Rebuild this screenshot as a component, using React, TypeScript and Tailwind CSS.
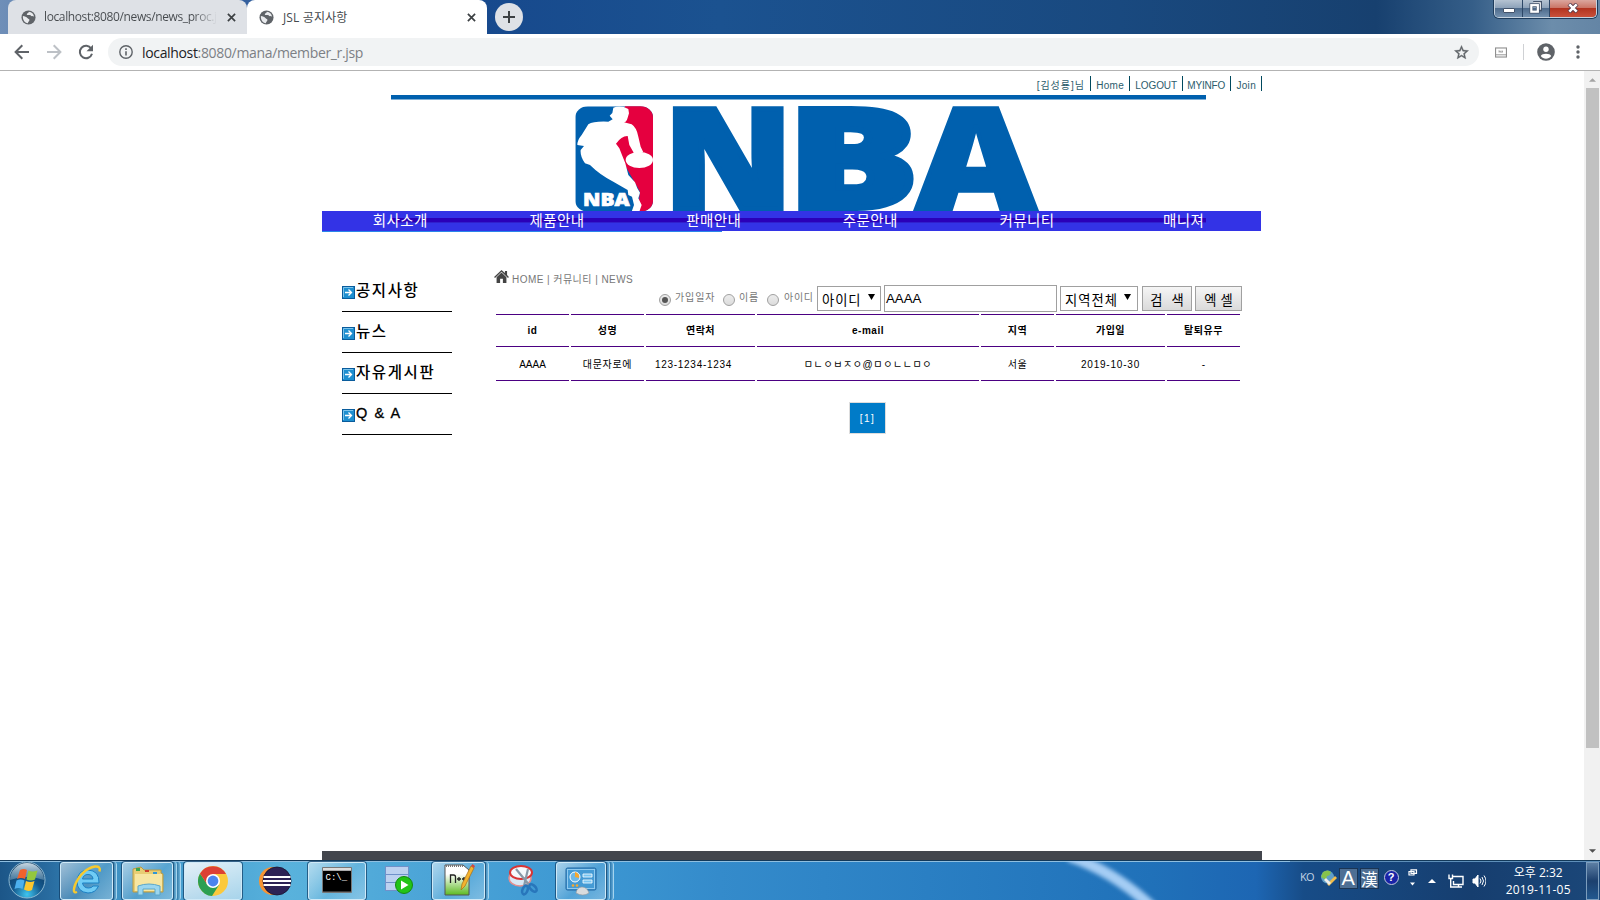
import React from "react";

const UI = "font-['Open_Sans','Noto_Sans_CJK_KR',sans-serif]";
const PAGE = "font-['Liberation_Sans','Noto_Sans_CJK_KR',sans-serif]";

function Globe() {
  return (
    <svg viewBox="0 0 16 16" className="h-[15px] w-[15px] shrink-0">
      <circle cx="8" cy="8" r="7.5" fill="#5f6368" />
      <path d="M2 6.5C4 7 6 7.2 6.8 8.5 7.5 9.8 9 9 9 10.6 9 12 7.6 12 7.4 14 4 14 1.8 11 2 6.5ZM8.4 1.8C8 3.4 6 3.4 6.2 5c1.5.8 2.6-.3 4 .6.8 1.8 2.4.8 3.7 1.4C13.5 4 11.500 2 8.400 1.800Z" fill="#e8eaed" />
    </svg>
  );
}

function Cross() {
  return (
    <svg viewBox="0 0 10 10" className="h-[9px] w-[9px] shrink-0" stroke="#3c4043" strokeWidth="1.9">
      <path d="M1 1l8 8M9 1l-8 8" />
    </svg>
  );
}

function TitleBar() {
  return (
    <div className="flex h-[34px] w-full shrink-0 bg-[linear-gradient(90deg,#6f8fb8_0%,#426ba6_8%,#17498d_30%,#1b5290_45%,#19497f_70%,#17406f_86%,#355e88_92%,#6c8dab_97%,#6485a5_100%)] pl-2">
      <div className={`${UI} flex h-[34px] w-[239px] items-center rounded-t-lg bg-[#dee1e6] pl-[13px] text-[12px] text-[#45494d]`}>
        <Globe />
        <span className="ml-[8px] w-[173px] overflow-hidden whitespace-nowrap bg-[linear-gradient(90deg,#45494d_86%,transparent)] bg-clip-text tracking-[-0.38px] text-transparent">localhost:8080/news/news_proc.jsp</span>
        <span className="ml-[10px]"><Cross /></span>
      </div>
      <div className={`${UI} flex h-[34px] w-[240px] items-center rounded-t-lg bg-white pl-[12px] text-[12px] text-[#45494d]`}>
        <Globe />
        <span className="ml-[8px] mt-px w-[185px] pl-px tracking-[0.15px]">JSL 공지사항</span>
        <Cross />
      </div>
      <div className="ml-[8px] mt-[3px] flex h-[28px] w-[28px] items-center justify-center rounded-full bg-[#dee1e6]">
        <svg viewBox="0 0 12 12" className="h-[12px] w-[12px]" stroke="#3c4043" strokeWidth="2"><path d="M6 0v12M0 6h12" /></svg>
      </div>
      <div className="ml-auto mr-[3px] flex h-[18px] w-[103px] overflow-hidden rounded-b-[5px] border border-t-0 border-[#c5d2df] shadow-[0_0_0_1px_#1e3c5c]">
        <div className="flex w-[28px] items-center justify-center border-r border-[#2c4767] bg-[linear-gradient(#b5c3d2_0%,#8ea3ba_45%,#4e6b8c_50%,#7491af_100%)]">
          <span className="mt-[3px] h-[5px] w-[12px] rounded-[1px] border border-[#43536b] bg-white" />
        </div>
        <div className="flex w-[27px] items-center justify-center border-r border-[#2c4767] bg-[linear-gradient(#b5c3d2_0%,#8ea3ba_45%,#4e6b8c_50%,#7491af_100%)]">
          <svg viewBox="0 0 14 14" className="mr-[2px] mt-[-2px] h-[13px] w-[13px]" fill="none"><path d="M4.500 1.500h8v8h-2" stroke="#43536b" strokeWidth="3" /><path d="M4.500 2h7.500v7.500" stroke="#fff" strokeWidth="1.500" /><rect x="2.500" y="4.500" width="7" height="7" stroke="#43536b" strokeWidth="4" /><rect x="2.500" y="4.500" width="7" height="7" stroke="#fff" strokeWidth="2.400" /></svg>
        </div>
        <div className="flex grow items-center justify-center bg-[linear-gradient(#dba79e_0%,#cb7667_45%,#b23420_50%,#c9503a_100%)]">
          <svg viewBox="0 0 12 10" className="mt-[-2px] h-[10px] w-[12px]"><path d="M2 1l8 8M10 1l-8 8" stroke="#51384a" strokeWidth="4.200" /><path d="M2.300 1.300l7.400 7.400M9.700 1.300l-7.400 7.400" stroke="#fff" strokeWidth="2.600" /></svg>
        </div>
      </div>
    </div>
  );
}

function Toolbar() {
  return (
    <div className="flex h-[37px] w-full shrink-0 items-center border-b border-[#b3b3b3] bg-white">
      <svg viewBox="0 0 16 16" className="ml-[14px] h-4 w-4" fill="none" stroke="#5f6368" strokeWidth="2"><path d="M15 8H2M8.300 1.300L1.600 8l6.700 6.700" /></svg>
      <svg viewBox="0 0 16 16" className="ml-4 h-4 w-4" fill="none" stroke="#bdc1c6" strokeWidth="2"><path d="M1 8h13M7.700 1.300L14.400 8l-6.700 6.700" /></svg>
      <svg viewBox="0 0 16 16" className="ml-4 h-4 w-4"><path d="M13.200 4.500A6.200 6.200 0 1 0 14 9.800" fill="none" stroke="#5f6368" strokeWidth="2" /><path d="M15 .7v6.500H8.500z" fill="#5f6368" /></svg>
      <div className={`${UI} ml-[14px] flex h-[28px] w-[1371px] items-center rounded-full bg-[#f1f3f4] pl-[11px] text-[14px]`}>
        <svg viewBox="0 0 14 14" className="h-[14px] w-[14px]" fill="none" stroke="#5f6368"><circle cx="7" cy="7" r="6.200" strokeWidth="1.400" /><path d="M7 6.200v4.300M7 3.300v1.700" strokeWidth="1.600" /></svg>
        <span className="ml-[9px] tracking-[-0.34px] text-[#7c8085]"><span className="text-[#202124]">localhost</span>:8080/mana/member_r.jsp</span>
        <svg viewBox="0 0 24 24" className="ml-auto mr-[9px] h-[17px] w-[17px]" fill="#5f6368" stroke="#5f6368" strokeWidth=".5"><path d="M22 9.240l-7.190-.62L12 2 9.190 8.630 2 9.240l5.460 4.730L5.820 21 12 17.270 18.180 21l-1.630-7.030L22 9.240zM12 15.400l-3.760 2.270 1-4.280-3.320-2.880 4.380-.38L12 6.100l1.710 4.040 4.380.38-3.320 2.880 1 4.280L12 15.400z" /></svg>
      </div>
      <svg viewBox="0 0 13 11" className="ml-[16px] h-[11px] w-[12px]" fill="none" stroke="#8f8f8f"><rect x=".6" y=".6" width="11.800" height="9.800" strokeWidth="1.200" /><path d="M1 8h11M4.500 5.500v-2l2 2v-2M8 3.500v2" /></svg>
      <span className="ml-[16px] h-4 w-px bg-[#cfd1d4]" />
      <svg viewBox="0 0 18 18" className="ml-[13px] h-[18px] w-[18px]"><circle cx="9" cy="9" r="8.800" fill="#5f6368" /><circle cx="9" cy="6.200" r="2.700" fill="#fff" /><path d="M3.800 13c1-3 9.400-3 10.400 0-2.500 3.700-7.900 3.700-10.400 0z" fill="#fff" /></svg>
      <svg viewBox="0 0 4 14" className="ml-[21px] h-[14px] w-[4px]" fill="#5f6368"><circle cx="2" cy="2" r="1.700" /><circle cx="2" cy="7" r="1.700" /><circle cx="2" cy="12" r="1.700" /></svg>
    </div>
  );
}

function TopLinks() {
  const items = [
    { t: "[김성룡]님", w: "w-[61px]", s: "tracking-[1px]" },
    { t: "Home", w: "w-[39px]", s: "tracking-[0.3px]" },
    { t: "LOGOUT", w: "w-[53px]", s: "tracking-[-0.1px]" },
    { t: "MYINFO", w: "w-[48px]", s: "tracking-[-0.2px]" },
    { t: "Join", w: "w-[31px]", s: "tracking-[0.3px]" },
  ];
  return (
    <div className={`${PAGE} flex h-[24px] justify-end pt-[5px] text-[10px] text-[#2c5c6c]`}>
      {items.map((i) => (
        <span key={i.t} className={`${i.w} ${i.s} h-[15px] whitespace-nowrap border-r border-[#00495e] pr-[5px] text-right leading-[19px]`}>{i.t}</span>
      ))}
    </div>
  );
}

function Banner() {
  return (
    <svg viewBox="322 95 940 116" className="block h-[116px] w-[940px]">
      <defs>
        <clipPath id="badge"><rect x="46" y="34" width="233" height="316" rx="38" ry="32" /></clipPath>
      </defs>
      <rect x="391" y="95" width="815" height="4.500" fill="#0060ae" />
      <g transform="translate(560 95) scale(0.33333)">
        <g clipPath="url(#badge)">
          <rect x="46" y="34" width="233" height="320" fill="#0060ae" />
          <path d="M195 30H300V360H232L240 290 200 220 165 145 180 120 190 80Z" fill="#e5003f" />
          <path d="M160 38Q182 30 205 42L207 55 203 68Q200 80 192 82L215 88Q230 98 235 125L242 155 250 172 225 180 208 150 203 123Q185 122 168 146L178 160 186 180 196 205 205 240 225 262 232 280 240 293 235 310 245 330 238 350 215 350 222 330 216 305 205 300 203 285 160 260Q120 240 90 210L75 205Q60 185 62 165L72 153 52 150Q52 135 65 120L85 88Q100 78 145 80L158 73 149 62 157 54Z" fill="#fff" />
          <ellipse cx="238" cy="195" rx="41" ry="24" fill="#fff" />
          <text x="69" y="333" fontFamily="Open Sans" fontWeight="800" fontSize="53" fill="#fff" stroke="#fff" strokeWidth="2" textLength="140" lengthAdjust="spacingAndGlyphs">NBA</text>
        </g>
      </g>
      <g fontFamily="Open Sans" fontWeight="800" fill="#0060ae" stroke="#0060ae" strokeMiterlimit="3">
        <text x="663.7" y="208.500" fontSize="139.500" strokeWidth="5" textLength="129" lengthAdjust="spacingAndGlyphs">N</text>
        <text x="787.5" y="208" fontSize="138" strokeWidth="6" textLength="131" lengthAdjust="spacingAndGlyphs">B</text>
        <text x="915.5" y="209.500" fontSize="142" strokeWidth="3.500" textLength="121" lengthAdjust="spacingAndGlyphs">A</text>
      </g>
    </svg>
  );
}

function Nav() {
  return (
    <>
      <div className="h-5 w-[939px] bg-[#3333e6]">
        <div className={`${PAGE} grid h-5 w-[940px] grid-cols-6 bg-[linear-gradient(#3333e6_0_7px,#2b00b8_7px_11px,#3020cd_11px_12px,#3333e6_12px)] bg-[length:815px_20px] bg-[position:69px_0] bg-no-repeat text-center text-[14.500px] leading-[20px] tracking-[0.4px] text-white`}>
          {["회사소개", "제품안내", "판매안내", "주문안내", "커뮤니티", "매니져"].map((t) => <span key={t}>{t}</span>)}
        </div>
      </div>
      <div className="h-px w-[400px] bg-[#2a86ea]" />
    </>
  );
}

function Sidebar() {
  return (
    <div className={`${PAGE} ml-5 mt-[39px] w-[110px] text-[15.500px] font-medium tracking-[1.600px] text-black`}>
      {["공지사항", "뉴스", "자유게시판", "Q & A"].map((t) => (
        <div key={t} className="flex h-[41px] items-center whitespace-nowrap border-b border-black">
          <svg viewBox="0 0 13 13" className="mt-[2px] h-[13px] w-[13px] shrink-0"><rect x=".5" y=".5" width="12" height="12" fill="#1e8fd0" stroke="#0a5c9c" /><path d="M1.500 11V1.500H11" stroke="#7cc4ec" fill="none" /><path d="M3 6.500h6M6.500 3.500l3 3-3 3" fill="none" stroke="#fff" strokeWidth="1.300" /></svg>
          <span className={t === "Q & A" ? "ml-px text-[14.500px] [-webkit-text-stroke:0.3px_black]" : "ml-px"}>{t}</span>
        </div>
      ))}
    </div>
  );
}

function Radio({ on }: { on?: boolean }) {
  return (
    <span className="mt-[3px] flex h-[12px] w-[12px] shrink-0 items-center justify-center rounded-full border border-[#a0a0a0] bg-[linear-gradient(#ececec,#dcdcdc)]">
      {on && <span className="h-[6px] w-[6px] rounded-full bg-[#555]" />}
    </span>
  );
}

function SearchRow() {
  const label = "mt-[-2px] shrink-0 whitespace-nowrap text-[10px] leading-[22px] text-[#777]";
  const btn = "flex h-[25px] items-center justify-center border border-[#a0a0a0] bg-[linear-gradient(#f5f5f5,#dadada)] pt-[4px] text-[13.300px] text-black";
  return (
    <div className="ml-[167px] flex h-[27px] items-center">
      <Radio on />
      <span className={`${label} ml-[4px] w-[48px] tracking-[0.9px]`}>가입일자</span>
      <Radio />
      <span className={`${label} ml-[4px] w-[28px] tracking-[0.7px]`}>이름</span>
      <Radio />
      <span className={`${label} ml-[5px] w-[33px] tracking-[0.7px]`}>아이디</span>
      <div className="flex h-[25px] w-[64px] shrink-0 items-center justify-between border border-[#a0a0a0] pl-[4px] pr-[5px] text-[13.300px] text-black">
        <span className="pt-[4px] tracking-[0.9px]">아이디</span>
        <svg viewBox="0 0 7 6" className="mb-[3px] h-[6px] w-[7px]"><path d="M0 0h7L3.500 6z" /></svg>
      </div>
      <div className="ml-[3px] h-[27px] w-[173px] shrink-0 border border-[#a0a0a0] pl-px text-[13.300px] leading-[25px] text-black">AAAA</div>
      <div className="ml-[3px] flex h-[25px] w-[78px] shrink-0 items-center justify-between border border-[#a0a0a0] pl-[4px] pr-[6px] text-[13.300px] text-black">
        <span className="pt-[4px] tracking-[1px]">지역전체</span>
        <svg viewBox="0 0 7 6" className="mb-[3px] h-[6px] w-[7px]"><path d="M0 0h7L3.500 6z" /></svg>
      </div>
      <div className={`${btn} ml-[4px] w-[50px] shrink-0 gap-[9px]`}><span>검</span><span>색</span></div>
      <div className={`${btn} ml-[3px] w-[47px] shrink-0 gap-[4px]`}><span>엑</span><span>셀</span></div>
    </div>
  );
}

function MemberTable() {
  const head = ["id", "성명", "연락처", "e-mail", "지역", "가입일", "탈퇴유무"];
  const row = ["AAAA", "대문자로에", "123-1234-1234", "ㅁㄴㅇㅂㅈㅇ@ㅁㅇㄴㄴㅁㅇ", "서울", "2019-10-30", "-"];
  const cell = "h-[34px] whitespace-nowrap border-b border-[#4b0082] leading-[35px]";
  const cellStyles = ["", "tracking-[0.7px]", "pr-[14px] tracking-[0.7px]", "tracking-[0.6px]", "tracking-[0.5px]", "tracking-[0.8px]", ""];
  const cols = "grid grid-cols-[73px_73px_109px_222px_73px_109px_73px] gap-x-[2px]";
  return (
    <div className="ml-[4px] mt-[2px] text-center text-[10px] text-black">
      <div className={`${cols} font-bold`}>
        {head.map((t) => <div key={t} className="h-[33px] border-y border-[#4b0082] leading-[31px] tracking-[0.5px]">{t}</div>)}
      </div>
      <div className={cols}>
        {row.map((t, i) => <div key={t} className={`${cell} ${cellStyles[i]}`}>{t}</div>)}
      </div>
    </div>
  );
}

function Content() {
  return (
    <div className={`${PAGE} ml-[40px] mt-[38px] w-[760px]`}>
      <div className="flex h-[15px] items-center pl-[2px] text-[10px] text-[#777]">
        <svg viewBox="0 0 16 14" className="mt-[-2px] h-[13px] w-[15px]" fill="#444"><path d="M8 0L0 7.500l1 1L8 2l7 6.500 1-1-2-2V1h-2.300v2.300z" /><path d="M8 2.800l5.300 5V14H9.500V9.500h-3V14H2.700V7.800z" /></svg>
        <span className="ml-[3px] whitespace-pre pt-[4px] tracking-[0.45px]">HOME | 커뮤니티 | NEWS</span>
      </div>
      <SearchRow />
      <MemberTable />
      <div className="ml-[357px] mt-[21px] flex h-[32px] w-[37px] items-center justify-center border border-[#ddd] bg-[#007bc8] text-[10px] font-medium tracking-[1.500px] text-white">[1]</div>
    </div>
  );
}

function WebPage() {
  return (
    <div className="flex h-[789px] w-full shrink-0 bg-white">
      <div className="flex h-[789px] w-[1584px] flex-col pl-[322px]">
        <div className="w-[940px]"><TopLinks /></div>
        <Banner />
        <Nav />
        <div className="flex h-[619px]"><Sidebar /><Content /></div>
        <div className="h-[9px] w-[940px] bg-[#43464d]" />
      </div>
      <div className="flex w-4 flex-col items-center bg-[#f1f1f1]">
        <svg viewBox="0 0 8 4" className="mt-[7px] h-[4px] w-[7px]"><path d="M0 4h8L4 0z" fill="#a3a3a3" /></svg>
        <div className="mt-[6px] h-[660px] w-[13px] bg-[#c1c1c1]" />
        <svg viewBox="0 0 8 4" className="mb-[7px] mt-auto h-[4px] w-[7px]"><path d="M0 0h8L4 4z" fill="#505050" /></svg>
      </div>
    </div>
  );
}

const active = "flex h-[38px] shrink-0 items-center justify-center rounded-[3px] border border-[#cfe9f7] bg-[linear-gradient(135deg,rgba(255,255,255,.55),rgba(255,255,255,.1)_55%,rgba(255,255,255,.3))] shadow-[0_0_0_1px_rgba(15,60,100,.7)]";
const stack = "h-[38px] w-[4px] shrink-0 rounded-r-[3px] border-r border-[#a5d4ee] bg-[linear-gradient(90deg,rgba(20,70,110,.4),rgba(255,255,255,.2))]";

function Taskbar() {
  return (
    <div className="flex h-10 w-full shrink-0 overflow-hidden border-t border-[#12395a] bg-[linear-gradient(90deg,#1c5688_0%,#286b9f_3%,#3b8dc0_6%,#4aa3d3_13%,#59b2dc_18%,#4ba4d7_27%,#3c97d2_37%,#348bcb_45%,#2a7fc3_58%,#2071b9_72%,#1d66b3_78.500%,#174c87_81.500%,#163e6f_92%,#1b4779_100%)]">
      <div className="flex h-[39px] w-[1290px] shrink-0 border-t border-[#8fbfe0]">
        <svg viewBox="0 0 38 38" className="ml-[8px] mt-[-1px] h-[38px] w-[38px] shrink-0">
          <defs>
            <radialGradient id="orb" cx=".5" cy=".9" r=".9"><stop offset="0" stopColor="#3fc5ef" /><stop offset=".45" stopColor="#14588d" /><stop offset="1" stopColor="#0c3358" /></radialGradient>
            <linearGradient id="gloss" x1="0" y1="0" x2="0" y2="1"><stop offset="0" stopColor="#e8f4fa" stopOpacity=".85" /><stop offset="1" stopColor="#a9cfe3" stopOpacity=".35" /></linearGradient>
          </defs>
          <circle cx="19" cy="19" r="18" fill="url(#orb)" stroke="#8db9d2" strokeWidth="1" />
          <path d="M2 19A17 17 0 0 1 36 19Q19 13 2 19Z" fill="url(#gloss)" />
          <path d="M12 9q4-2 7 0l-2 9q-4-2-8 0z" fill="#f0622c" /><path d="M20.500 9.500q4 2 9 0l-2.500 9q-4 2-8.500 0z" fill="#93c83e" />
          <path d="M8.500 19.500q4-2 8 0l-2 8.500q-4-2-8 0z" fill="#4cb0ee" /><path d="M18 20q4 2 8.500 0l-2.500 9q-4 2-8-.5z" fill="#fcc62e" />
        </svg>
        <div className={`${active} ml-[14px] w-[53px]`}>
          <svg viewBox="0 0 32 32" className="mt-[-2px] h-8 w-8"><path d="M28 19H11.500q1 5 6 5 3.500 0 4.500-2h5.500q-3 7-10.500 7-11-1-11-12 1-11 11-11 11.500.500 11 13zM11.500 15H22q-.500-4.500-5-4.500T11.500 15z" fill="#6fcbf5" stroke="#1b80c4" strokeWidth="1" /><path d="M6 28Q1 30 4 21 11 5 24 2.500q6-.500 4.500 5" fill="none" stroke="#f7c92e" strokeWidth="2.400" /></svg>
        </div>
        <div className={stack} />
        <div className={`${active} ml-[5px] w-[51px]`}>
          <svg viewBox="0 0 34 30" className="h-[30px] w-[34px]"><path d="M2 26V3l8-2 3 3h17v3l2 1v18z" fill="#e8cd73" stroke="#b99a43" /><path d="M4 8h27v17H4z" fill="#f7e6a2" /><path d="M5 2h4v3H5z" fill="#3aa54b" /><path d="M14 4h4v2h-4z" fill="#cc3d2b" /><path d="M22 6h4v2h-4z" fill="#3196d4" /><path d="M7 29V20q11-4 22 0v9h-5v-6H12v6z" fill="#9bd6ef" stroke="#5ba6c9" /></svg>
        </div>
        <div className={stack} /><div className={stack} />
        <div className={`${active} ml-[3px] w-[58px] bg-[linear-gradient(160deg,rgba(255,255,255,.85),rgba(255,255,255,.5))]`}>
          <svg viewBox="0 0 30 30" className="h-[30px] w-[30px]"><circle cx="15" cy="15" r="15" fill="#fbc93c" /><path d="M2 7.500A15 15 0 0 0 14 30L21 19 15 15 9 18z" fill="#2c9f51" /><path d="M2 7.500A15 15 0 0 1 28 8H15L9 18z" fill="#dc4034" /><circle cx="15" cy="15" r="7" fill="#fff" /><circle cx="15" cy="15" r="5.400" fill="#4a84ee" /></svg>
        </div>
        <div className="flex w-[66px] shrink-0 items-center justify-center">
          <svg viewBox="0 0 34 30" className="mt-[-1px] h-[30px] w-[34px]"><circle cx="15" cy="15" r="14" fill="#f79433" /><circle cx="19" cy="15" r="14" fill="#2c2255" stroke="#17132e" strokeWidth=".8" /><path d="M5.500 11h27M5 15h28M5.500 19h27" stroke="#fff" strokeWidth="2" /></svg>
        </div>
        <div className={`${active} w-[58px]`}>
          <svg viewBox="0 0 30 26" className="mt-[-2px] h-[26px] w-[30px]"><rect width="30" height="26" rx="1" fill="#777" /><rect x="1" y="1" width="28" height="2.500" fill="#ddd" /><rect x="1" y="4" width="28" height="20.500" fill="#000" /><text x="3.500" y="12.500" fontFamily="Liberation Mono" fontSize="9" fill="#fff">C:\_</text></svg>
        </div>
        <div className="flex w-[66px] shrink-0 items-center justify-center">
          <svg viewBox="0 0 28 28" className="mt-[-2px] h-[28px] w-[28px]"><g fill="#bcd1f0" stroke="#6f91c9"><rect x=".5" y=".5" width="23" height="8" /><rect x=".5" y="8.500" width="23" height="8" /><rect x=".5" y="16.500" width="23" height="8" /></g><circle cx="19" cy="19" r="8.500" fill="#22c417" stroke="#158a0e" /><path d="M16 14.500v9l7.500-4.500z" fill="#fff" /></svg>
        </div>
        <div className={`${active} w-[53px]`}>
          <svg viewBox="0 0 32 32" className="mt-[-2px] h-8 w-8"><defs><linearGradient id="npp" x1="0" y1="0" x2="0" y2="1"><stop offset=".3" stopColor="#fff" /><stop offset="1" stopColor="#5cba21" /></linearGradient></defs><path d="M2 1h18l6 5v25H2z" fill="url(#npp)" stroke="#555" /><path d="M3 2h17" stroke="#777" strokeWidth="2" strokeDasharray="1 1" /><path d="M7.500 19v-8h3q2 0 2 2v6M14 15h4M16 13v4M19 15h4M21 13v4" stroke="#222" strokeWidth="1.300" fill="none" /><path d="M18 26l1-6L28 2l3 2-9 18z" fill="#f3b32e" stroke="#a86d15" strokeWidth=".7" /><path d="M28 2l1.500-2L32 2l-1 2z" fill="#d7473c" /></svg>
        </div>
        <div className={stack} />
        <div className="flex w-[67px] shrink-0 items-center justify-center">
          <svg viewBox="0 0 32 32" className="mt-[-3px] h-8 w-8"><ellipse cx="13" cy="14" rx="11" ry="8" fill="#d9e8f5" stroke="#e68e8e" strokeWidth="1.500" /><ellipse cx="14" cy="8.500" rx="11" ry="6.500" fill="#f6f9fc" stroke="#d93434" strokeWidth="2" /><path d="M9 5l14 17M21 5l-4 17" stroke="#8899a8" strokeWidth="2.200" /><ellipse cx="18" cy="26" rx="2.500" ry="4.500" fill="none" stroke="#2876bb" strokeWidth="2.600" transform="rotate(20 18 26)" /><ellipse cx="26" cy="24" rx="2.500" ry="4.500" fill="none" stroke="#2876bb" strokeWidth="2.600" transform="rotate(-45 26 24)" /></svg>
        </div>
        <div className={`${active} w-[50px]`}>
          <svg viewBox="0 0 32 30" className="h-[30px] w-[32px]"><rect x="1" y="2" width="30" height="22" rx="1.500" fill="#459bd5" stroke="#2165a0" /><rect x="2.500" y="3.500" width="27" height="19" fill="none" stroke="#8fcaf0" /><circle cx="10" cy="11" r="5" fill="#6eb9e8" stroke="#fff" /><path d="M10 11V6a5 5 0 0 1 4 6z" fill="#f9a72b" /><path d="M18 8h9v3h-9zM18 14h9v3h-9z" fill="#79c5f2" stroke="#fff" strokeWidth=".8" /><circle cx="8" cy="19.500" r="1.300" fill="#f9a72b" /><circle cx="12" cy="19.500" r="1.300" fill="#f9a72b" /><path d="M11 27q1-6 6-6t7 6q-6 4-13 0z" fill="#d9dcde" stroke="#999" strokeWidth=".6" /></svg>
        </div>
        <div className={stack} /><div className={stack} />
        <svg viewBox="0 0 90 38" className="ml-auto mr-[125px] h-[38px] w-[90px] shrink-0 overflow-visible blur-[2px]"><path d="M-6-6Q40 10 78 46" fill="none" stroke="#a5cdf4" strokeWidth="11" /></svg>
      </div>
      <div className="flex h-[39px] grow items-center border-t border-[#5e8fb9] text-white">
        <span className={`${UI} ml-[10px] mt-[-8px] text-[11px] tracking-[-0.8px] text-[#c3d4e6]`}>KO</span>
        <svg viewBox="0 0 17 16" className="ml-[6px] mt-[-6px] h-4 w-[17px]"><circle cx="7.500" cy="7" r="6.500" fill="#609fc8" /><path d="M3 2q5-3 8 0-1 4-4 4l-1 4-5-3z" fill="#87c24c" /><path d="M7 14l8-8 2 2-8 8z" fill="#f1be4c" /><path d="M4 10l5 5 2-2-5-5z" fill="#eee" /></svg>
        <span className="ml-[2px] mt-[-6px] flex h-[21px] w-[19px] items-center justify-center border border-[#1b3554] bg-[#4e6f94] font-['Liberation_Sans'] text-[20px] leading-none">A</span>
        <span className="ml-[2px] mt-[-6px] flex h-[21px] w-[19px] items-center justify-center border border-[#1b3554] bg-[#4e6f94] font-['Noto_Sans_CJK_JP',sans-serif] text-[17px] leading-none">漢</span>
        <span className="ml-[5px] mt-[-7px] flex h-[15px] w-[15px] items-center justify-center rounded-full border border-[#c3c8dd] bg-[#1923a7] font-['Liberation_Sans'] text-[11px] font-bold leading-none">?</span>
        <svg viewBox="0 0 10 17" className="ml-[9px] mt-[-8px] h-[17px] w-[10px]" fill="none" stroke="#fff"><path d="M3 .8h5.500v3.500H3zM1 2.500h5v3.500H1z" strokeWidth="1.200" /><path d="M2 13.500h5l-2.500 3z" fill="#fff" stroke="none" /></svg>
        <svg viewBox="0 0 8 4" className="ml-[10px] h-[4px] w-[8px]"><path d="M0 4h8L4 0z" fill="#fff" /></svg>
        <svg viewBox="0 0 16 15" className="ml-[12px] mt-[-1px] h-[15px] w-[16px]" fill="none" stroke="#fff" strokeWidth="1.400"><path d="M4.500 3.500H15v8H5.500V8M7 14h7M10.500 11v3" /><path d="M1 1.500v4h3.500v-4M2.700 5.500V14H7" /></svg>
        <svg viewBox="0 0 14 14" className="ml-[8px] mt-[-1px] h-[14px] w-[14px]" fill="none" stroke="#fff"><path d="M1 5h2l3-4v12l-3-4H1z" fill="#fff" /><path d="M8 4.500q2 2.500 0 5M10 3q3 4 0 8M12 1.500q4 5.500 0 11" /></svg>
        <div className={`${UI} ml-[19px] mt-[-1px] w-[67px] whitespace-nowrap text-center text-[12px] leading-[17px]`}>
          <div>오후 2:32</div>
          <div className="tracking-[0.25px]">2019-11-05</div>
        </div>
        <span className="ml-auto mr-px h-[38px] w-[13px] border border-[#7c9dbd] bg-[linear-gradient(#5c7fa4,#1c406e_50%,#22588f)]" />
      </div>
    </div>
  );
}

export default function App() {
  return (
    <div className="flex h-[900px] w-[1600px] flex-col overflow-hidden bg-white">
      <TitleBar />
      <Toolbar />
      <WebPage />
      <Taskbar />
    </div>
  );
}
